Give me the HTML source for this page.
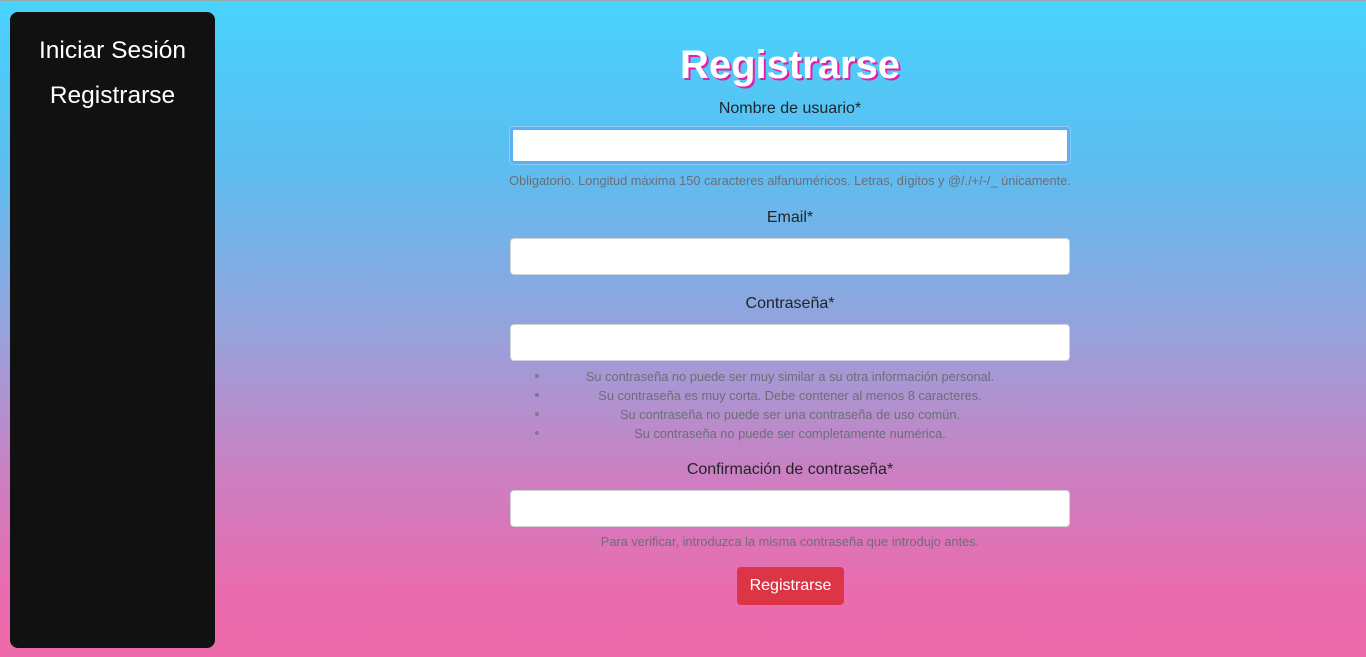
<!DOCTYPE html>
<html><head><meta charset="utf-8"><style>
*{margin:0;padding:0;box-sizing:border-box}
body{width:1366px;height:657px;overflow:hidden;font-family:"Liberation Sans",Arial,sans-serif;position:relative;
background:linear-gradient(180deg,#48d3fe 0%,#5cbdf0 25%,#95a3dc 50%,#cb80c2 72%,#ea6caf 90%,#ee6aaa 100%);border-top:1px solid #9aa}
.side{position:absolute;left:10px;top:11px;width:205px;height:636px;background:#111;border-radius:8px;color:#fff;text-align:center;font-size:24.5px}
.side div{position:absolute;left:0;width:100%}
.t{position:absolute;left:510px;width:560px;text-align:center}
.w{position:absolute;left:290px;width:1000px;text-align:center;white-space:nowrap}
h1{font-size:40px;font-weight:bold;color:#fff;text-shadow:2px 2px 0 #e020a8;}
.l{font-size:16px;color:#212529}
.i{position:absolute;left:510px;width:560px;height:37px;background:#fff;border:1px solid #ced4da;border-radius:4px}
.h{font-size:12.8px;color:#6b6e78}
.b{position:absolute;left:737px;top:566px;width:107px;height:38px;background:#dc3545;border-radius:4px;color:#fff;font-size:16px;text-align:center;line-height:38px}
.dot{position:absolute;left:535px;width:4px;height:4px;border-radius:50%;background:#7a7a90}
</style></head><body>
<div class="side"><div style="top:25px">Iniciar Sesión</div><div style="top:70px">Registrarse</div></div>
<h1 class="t" style="top:42px">Registrarse</h1>
<div class="t l" style="top:99px">Nombre de usuario*</div>
<div class="i" style="top:126px;border:3px solid #5cb0f6;box-shadow:0 0 0 1px #8ccbf8"></div>
<div class="w h" style="top:172px">Obligatorio. Longitud máxima 150 caracteres alfanuméricos. Letras, dígitos y @/./+/-/_ únicamente.</div>
<div class="t l" style="top:208px">Email*</div>
<div class="i" style="top:237px"></div>
<div class="t l" style="top:294px">Contraseña*</div>
<div class="i" style="top:323px"></div>
<div class="t h" style="top:366px;line-height:19px">Su contraseña no puede ser muy similar a su otra información personal.<br>Su contraseña es muy corta. Debe contener al menos 8 caracteres.<br>Su contraseña no puede ser una contraseña de uso común.<br>Su contraseña no puede ser completamente numérica.</div>
<div class="dot" style="top:373px"></div><div class="dot" style="top:392px"></div><div class="dot" style="top:411px"></div><div class="dot" style="top:430px"></div>
<div class="t l" style="top:460px">Confirmación de contraseña*</div>
<div class="i" style="top:489px"></div>
<div class="t h" style="top:533px">Para verificar, introduzca la misma contraseña que introdujo antes.</div>
<div class="b" style="top:566px">Registrarse</div>
</body></html>
